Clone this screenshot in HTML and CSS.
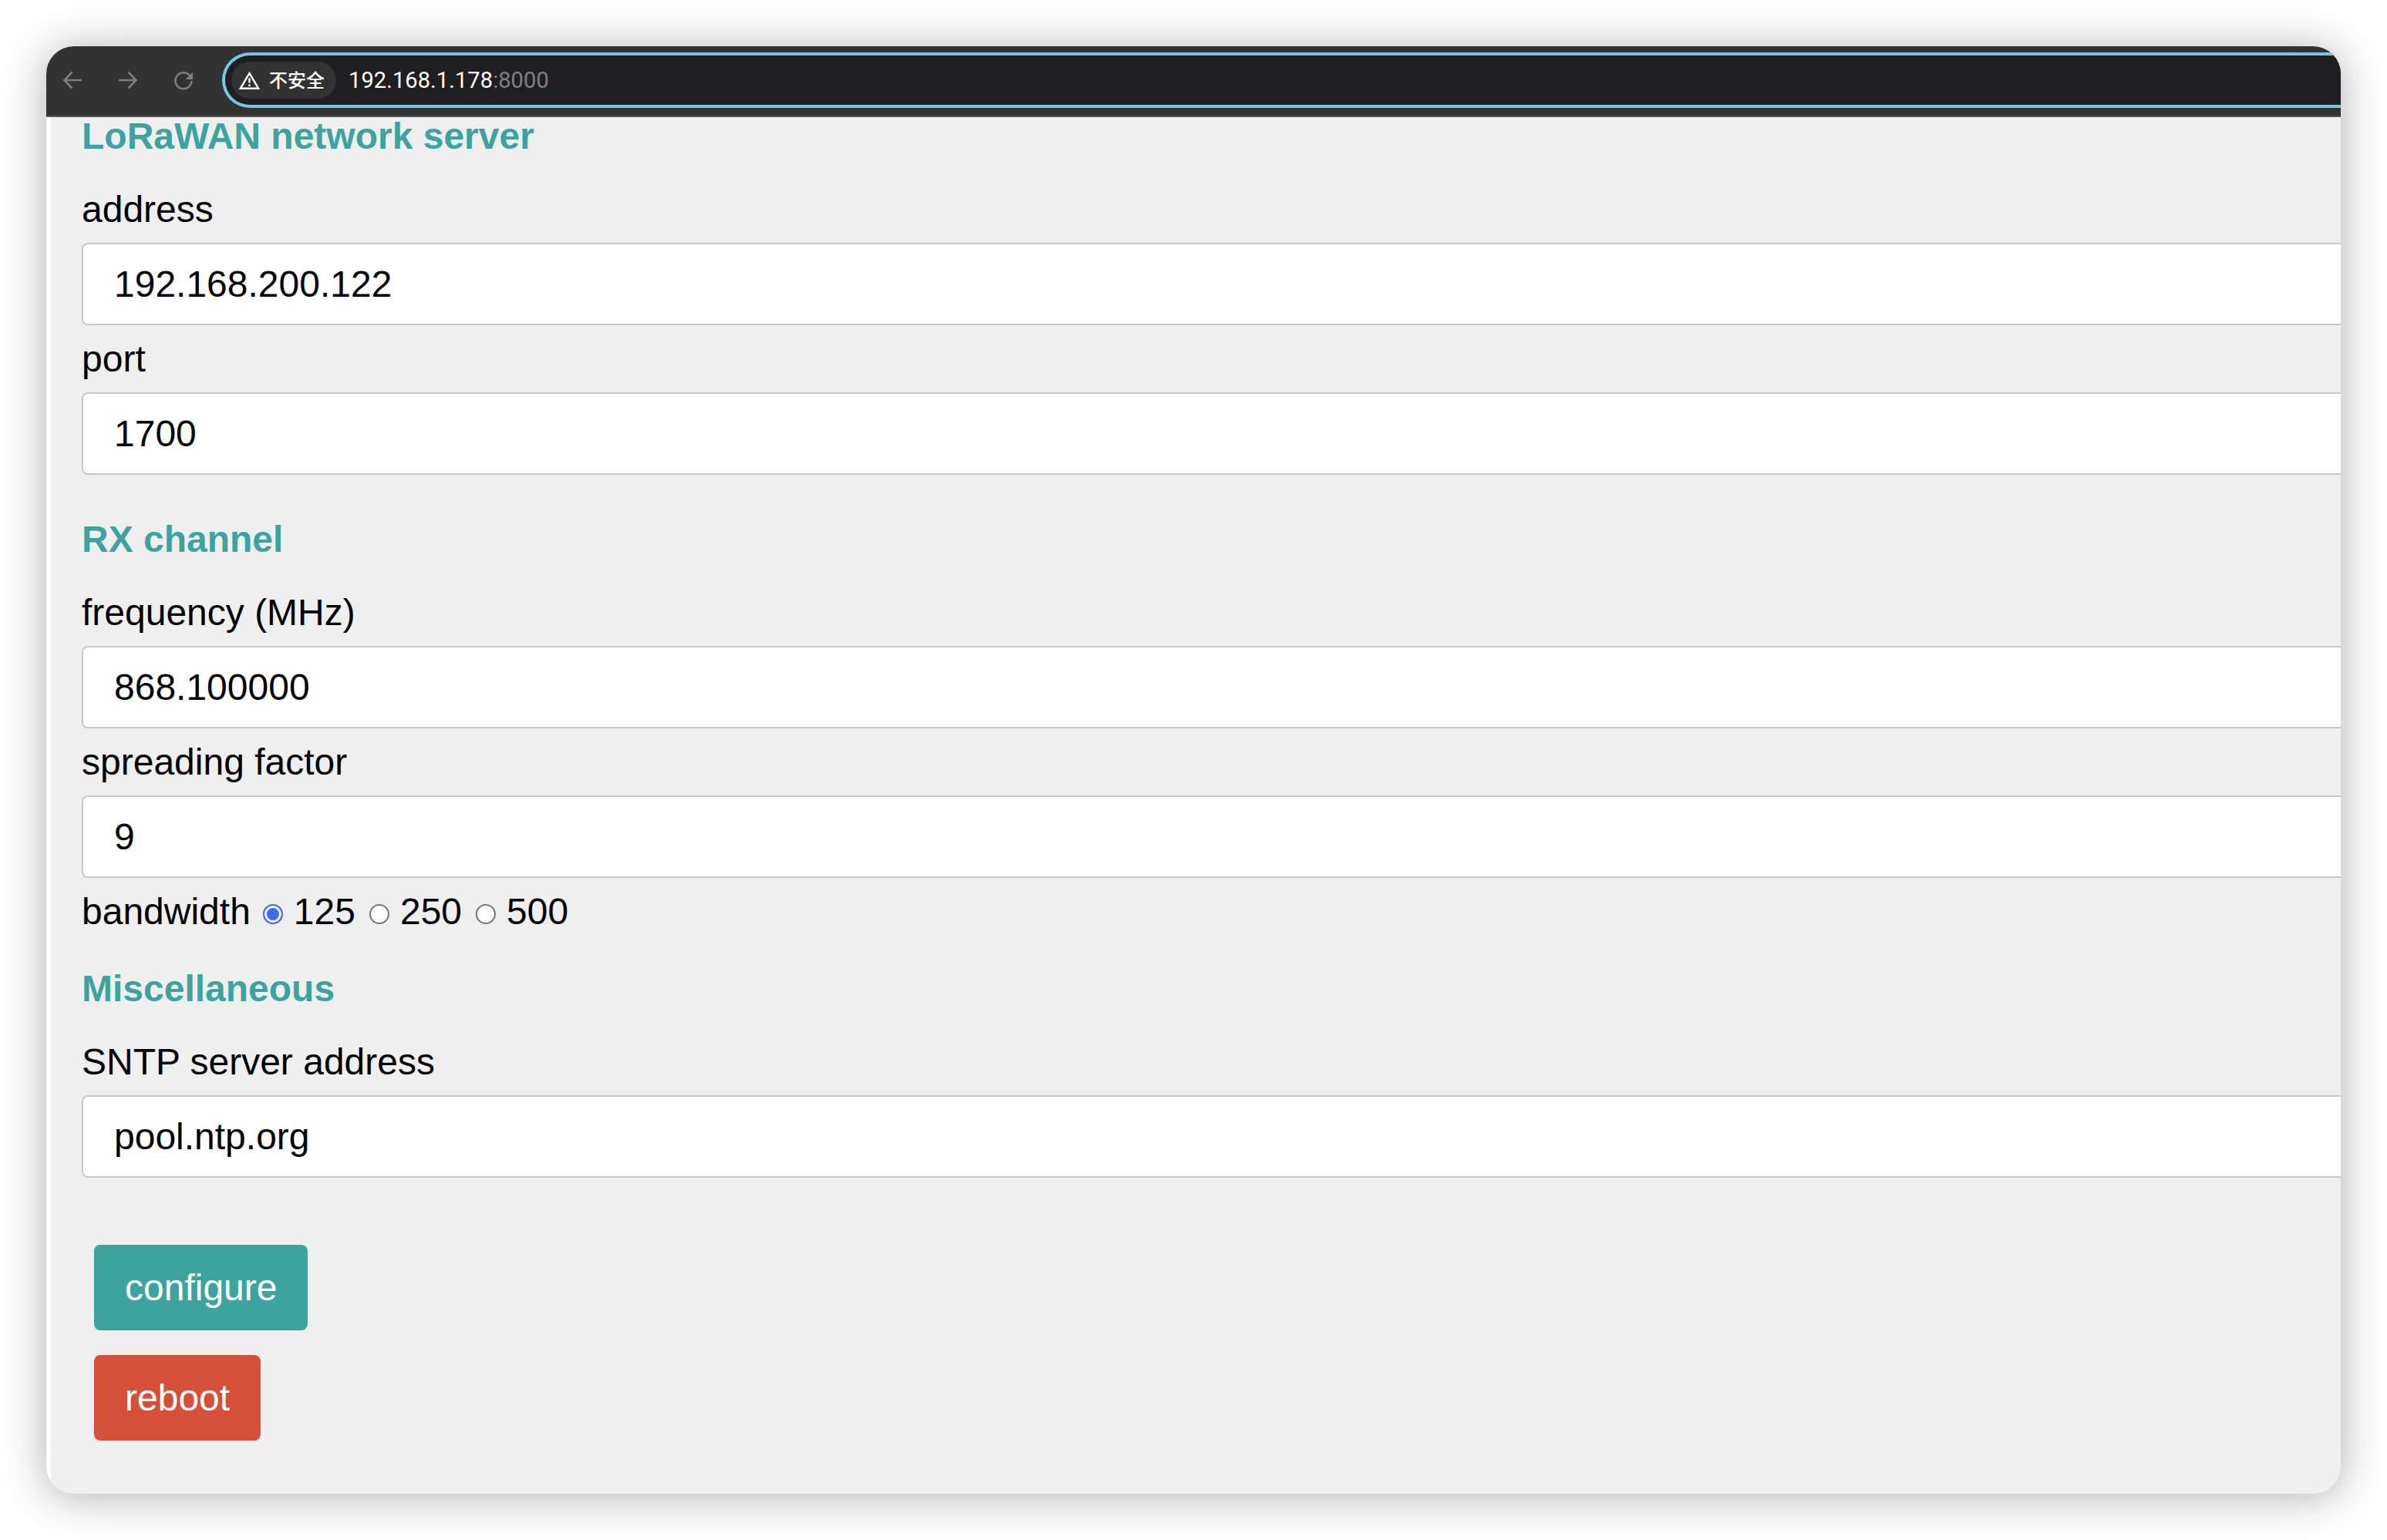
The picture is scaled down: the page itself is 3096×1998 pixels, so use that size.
FILE: index.html
```html
<!DOCTYPE html>
<html lang="en">
<head>
<meta charset="utf-8">
<title>LoRaWAN gateway</title>
<link rel="stylesheet" href="styles.css">
</head>
<body>
<div class="window">
  <header class="toolbar">
    <svg class="nav" viewBox="0 0 24 24"><path d="M24 12H1.500M11.500 1.500 1.500 12l10 10.500"/></svg>
    <svg class="nav" viewBox="0 0 24 24"><path d="M0 12h22.500M12.500 1.500 22.500 12l-10 10.500"/></svg>
    <svg class="nav reload" viewBox="0 0 24 24"><path d="M20.200 6.200A10.500 10.500 0 1 0 22.500 13"/><path class="tip" d="M24 1.500V11h-9.500z"/></svg>
    <div class="omnibox">
      <div class="chip">
        <svg class="warn" viewBox="0 0 27 23"><path class="warn-edge" d="M13.500 2 1.800 21.800h23.400z"/><path class="warn-edge" d="M13.500 8.500v6M13.500 16.500v2.500"/></svg>
        <span class="chip-text">不安全</span>
      </div>
      <div class="url">192.168.1.178<span class="port">:8000</span></div>
    </div>
  </header>
  <main class="content">
    <h3 class="first">LoRaWAN network server</h3>
    <label for="addr">address</label>
    <input id="addr" class="field" type="text" value="192.168.200.122">
    <label for="port">port</label>
    <input id="port" class="field" type="text" value="1700">
    <h3>RX channel</h3>
    <label for="freq">frequency (MHz)</label>
    <input id="freq" class="field" type="text" value="868.100000">
    <label for="sf">spreading factor</label>
    <input id="sf" class="field" type="text" value="9">
    <div class="radios">
      <span>bandwidth</span>
      <input class="radio" type="radio" name="bw" checked><span>125</span>
      <input class="radio" type="radio" name="bw"><span>250</span>
      <input class="radio" type="radio" name="bw"><span>500</span>
    </div>
    <h3>Miscellaneous</h3>
    <label for="sntp">SNTP server address</label>
    <input id="sntp" class="field" type="text" value="pool.ntp.org">
    <div class="actions">
      <button class="btn teal">configure</button>
      <button class="btn red">reboot</button>
    </div>
  </main>
</div>
</body>
</html>
```
FILE: styles.css
```css
* { box-sizing: border-box; }
html, body { margin: 0; background: #fff; }
body { width: 3096px; height: 1998px; padding: 60px; overflow: hidden; font-family: "Liberation Sans", Arial, sans-serif; }
.window { width: 2976px; height: 1878px; border-radius: 36px; overflow: hidden; background: #efefef; box-shadow: 0 4px 56px rgba(0,0,0,.32); display: flex; flex-direction: column; }

.toolbar { height: 92px; flex: none; background: #323232; border-bottom: 2px solid #555; display: flex; align-items: center; gap: 48px; padding: 0 0 2px 22px; }
.nav { width: 24px; height: 24px; fill: none; stroke: #7f7f7f; stroke-width: 2.6; flex: none; overflow: visible; }
.nav .tip { fill: #7f7f7f; stroke: none; }
.omnibox { height: 72px; margin-left: -10px; flex: 1; background: #1f1f21; border: 4px solid #76c8df; border-right: 0; border-radius: 36px 0 0 36px; display: flex; align-items: center; padding-left: 8px; color: #fff; }
.chip { height: 48px; width: 136px; flex: none; background: #323232; border-radius: 24px; display: flex; align-items: center; gap: 12px; padding-left: 10px; font: 500 24px "Noto Sans CJK SC", sans-serif; white-space: nowrap; }
.chip-text { margin-top: -3px; }
.warn { width: 27px; height: 23px; flex: none; }
.warn-edge { fill: none; stroke: #fff; stroke-width: 2.4; }
.url { margin-left: 16px; font: 29.200px Roboto, sans-serif; }
.port { color: #808080; }

.content { flex: 1; display: flex; flex-direction: column; padding-left: 40px; border-left: 6px solid #fff; color: #000; font-size: 48px; line-height: 55px; }
h3 { margin: 40px 0; color: #3da39f; font-size: 48px; font-weight: bold; line-height: 55px; }
h3.first { margin-top: -3px; }
label { display: block; margin-bottom: 16px; }
.field { display: block; width: 100%; height: 107px; flex: none; border: 2px solid #c8c8c8; border-right: 0; border-radius: 8px 0 0 8px; background: #fff; padding: 0 0 0 40px; margin: 0 0 16px; font: 48px "Liberation Sans", Arial, sans-serif; color: #000; outline: none; }
.radios { display: flex; align-items: flex-start; height: 60px; flex: none; }
.radio { appearance: none; width: 26px; height: 26px; margin: 18px 14px 0 18px; flex: none; border-radius: 50%; border: 2px solid #767676; background: #fff; }
.radio:checked { border-color: #3b6cf6; background: #3b6cf6; box-shadow: inset 0 0 0 3px #fff; }
.radios span:first-child + .radio { margin-left: 16px; }
.actions { padding: 71px 0 0 16px; display: flex; flex-direction: column; align-items: flex-start; gap: 32px; }
.btn { border: 0; border-radius: 8px; height: 111px; padding: 0 40px; font: 48px "Liberation Sans", Arial, sans-serif; color: #fff; }
.teal { background: #3da39f; }
.red { background: #d4503b; }
```
